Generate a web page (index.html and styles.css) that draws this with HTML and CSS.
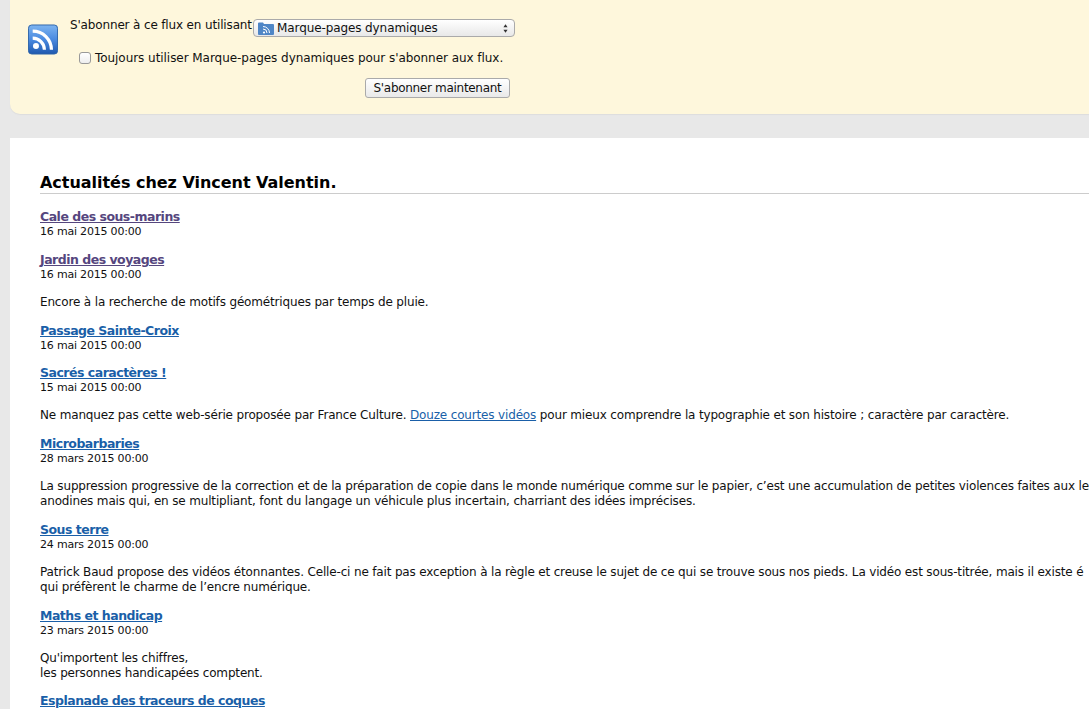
FILE: index.html
```html
<!DOCTYPE html>
<html lang="fr">
<head>
<meta charset="utf-8">
<title>Actualités chez Vincent Valentin.</title>
<link rel="stylesheet" href="styles.css">
</head>
<body>
<header class="subscribe">
  <svg class="feed-icon" viewBox="0 0 32 32" aria-hidden="true">
    <defs>
      <linearGradient id="g1" x1="0" y1="0" x2="0" y2="1">
        <stop offset="0" stop-color="#7db4f0"/>
        <stop offset="0.5" stop-color="#4a8ae0"/>
        <stop offset="1" stop-color="#1f58ae"/>
      </linearGradient>
    </defs>
    <rect x="0.5" y="0.5" width="31" height="31" rx="3.5" fill="url(#g1)" stroke="#2c62a8"/>
    <circle cx="8.500" cy="23" r="3.200" fill="#fff"/>
    <path d="M5 14.500a12.500 12.500 0 0 1 12.500 12.500" fill="none" stroke="#fff" stroke-width="3.400"/>
    <path d="M5 7a20 20 0 0 1 20 20" fill="none" stroke="#fff" stroke-width="3.400"/>
  </svg>
  <form class="subscribe-form">
    <div class="row-select">
      <span class="select-caption">S'abonner à ce flux en utilisant</span>
      <div class="select">
        <svg class="mini-folder" viewBox="0 0 16 14" aria-hidden="true">
          <path d="M0 2.500a1 1 0 0 1 1-1h4l1 1.500h9a1 1 0 0 1 1 1V13a1 1 0 0 1-1 1H1a1 1 0 0 1-1-1z" fill="#4f86c6"/>
          <circle cx="6" cy="11.500" r="1.100" fill="#fff"/>
          <path d="M5 8a4 4 0 0 1 4 4M5 5.500a6.500 6.500 0 0 1 6.500 6.500" fill="none" stroke="#fff" stroke-width="1"/>
        </svg>
        <span class="select-label">Marque-pages dynamiques</span>
        <svg class="updown" viewBox="0 0 6 10" aria-hidden="true"><path d="M3 0l2.500 3.500h-5zM3 10l2.500-3.500h-5z" fill="#333"/></svg>
      </div>
    </div>
    <label class="row-check"><span class="check"></span>Toujours utiliser Marque-pages dynamiques pour s'abonner aux flux.</label>
    <div class="row-button"><button type="button" class="btn">S'abonner maintenant</button></div>
  </form>
</header>
<main class="feed">
  <h1>Actualités chez Vincent Valentin.</h1>
  <article><h3><a class="visited" href="#">Cale des sous-marins</a></h3><time>16 mai 2015 00:00</time></article>
  <article><h3><a class="visited" href="#">Jardin des voyages</a></h3><time>16 mai 2015 00:00</time>
    <p>Encore à la recherche de motifs géométriques par temps de pluie.</p></article>
  <article><h3><a href="#">Passage Sainte-Croix</a></h3><time>16 mai 2015 00:00</time></article>
  <article><h3><a href="#">Sacrés caractères !</a></h3><time>15 mai 2015 00:00</time>
    <p>Ne manquez pas cette web-série proposée par France Culture. <a href="#">Douze courtes vidéos</a> pour mieux comprendre la typographie et son histoire ; caractère par caractère.</p></article>
  <article><h3><a href="#">Microbarbaries</a></h3><time>28 mars 2015 00:00</time>
    <p>La suppression progressive de la correction et de la préparation de copie dans le monde numérique comme sur le papier, c’est une accumulation de petites violences faites aux lec<br>anodines mais qui, en se multipliant, font du langage un véhicule plus incertain, charriant des idées imprécises.</p></article>
  <article><h3><a href="#">Sous terre</a></h3><time>24 mars 2015 00:00</time>
    <p>Patrick Baud propose des vidéos étonnantes. Celle-ci ne fait pas exception à la règle et creuse le sujet de ce qui se trouve sous nos pieds. La vidéo est sous-titrée, mais il existe é<br>qui préfèrent le charme de l’encre numérique.</p></article>
  <article><h3><a href="#">Maths et handicap</a></h3><time>23 mars 2015 00:00</time>
    <p>Qu'importent les chiffres,<br>les personnes handicapées comptent.</p></article>
  <article><h3><a href="#">Esplanade des traceurs de coques</a></h3></article>
</main>
</body>
</html>
```
FILE: styles.css
```css
html, body { margin: 0; height: 709px; overflow: hidden; }
body {
  background: #e8e8e8;
  font-family: "DejaVu Sans", sans-serif;
  font-size: 12px;
  letter-spacing: -0.16px;
  color: #111;
  padding-left: 10px;
}
.subscribe {
  height: 114px;
  box-sizing: border-box;
  background: #fef7dc;
  border-bottom-left-radius: 10px;
  display: flex;
  align-items: flex-start;
  padding: 24px 0 0 18px;
  margin-bottom: 24px;
  box-shadow: 0 1px 1px #ddd;
  letter-spacing: -0.05px;
}
.feed-icon { width: 30px; height: 31px; margin-right: 12px; flex: none; }
.subscribe-form { width: 440px; margin-top: -6px; }
.row-select { display: flex; align-items: flex-start; gap: 2px; height: 31px; white-space: nowrap; }
.select-caption { width: 181px; flex: none; letter-spacing: -0.15px; }
.select {
  width: 262px; height: 18px; flex: none; box-sizing: border-box; margin-top: 1px;
  border: 1px solid #aaa; border-radius: 4px;
  background: linear-gradient(#fff, #e8e8e8);
  display: flex; align-items: center; padding: 0 6px 0 4px;
  letter-spacing: -0.1px;
}
.mini-folder { width: 16px; height: 14px; margin-right: 3px; }
.select-label { flex: 1; }
.updown { width: 5px; height: 9px; }
.row-check { display: flex; align-items: center; margin-left: 9px; height: 18px; white-space: nowrap; }
.check {
  width: 10px; height: 10px; border: 1px solid #999; border-radius: 3px;
  background: linear-gradient(#fff, #eee); margin-right: 4px; flex: none;
}
.row-button { display: flex; justify-content: flex-end; margin-top: 11px; }
.btn {
  width: 145px; height: 20px; padding: 0; font: inherit; letter-spacing: -0.3px; color: #111;
  border: 1px solid #aaa; border-radius: 3px; background: linear-gradient(#fff, #e9e9e9);
}
.feed { background: #fff; height: 600px; padding: 34px 0 0 30px; }
h1 {
  margin: 0 0 15px; font-size: 16px; font-weight: bold; line-height: 21px; color: #000;
  border-bottom: 1px solid #ccc; letter-spacing: -0.03px;
}
article { margin-bottom: 12.75px; white-space: nowrap; }
h3 { margin: 0; font-size: 12.5px; line-height: 16px; font-weight: bold; letter-spacing: -0.5px; }
time { display: block; line-height: 14px; font-size: 11px; letter-spacing: -0.2px; }
p { margin: 13px 0 0; line-height: 15px; }
a { color: #1a5fa8; }
a.visited { color: #55467e; }
```
